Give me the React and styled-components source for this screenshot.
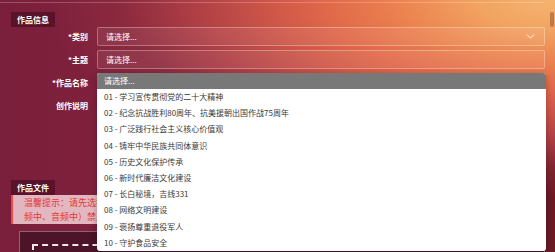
import React from "react";
import styled, { createGlobalStyle } from "styled-components";
import { ChevronDown } from "lucide-react";

const GlobalStyle = createGlobalStyle`
  html, body {
    margin: 0;
    padding: 0;
  }
  body {
    width: 555px;
    height: 252px;
    overflow: hidden;
    font-family: "Noto Sans CJK SC", "Noto Sans", sans-serif;
  }
`;

const Page = styled.div`
  position: relative;
  width: 555px;
  height: 252px;
  overflow: hidden;
  box-sizing: border-box;
  padding-top: 2px;
  background:
    radial-gradient(
      ellipse 92% 78% at 100% 0%,
      #f4b470 0%,
      #f2a462 15%,
      #ec8450 30%,
      #e0684a 45%,
      #d05848 55%,
      #b04045 70%,
      rgba(150, 50, 62, 0.5) 85%,
      rgba(150, 50, 62, 0) 100%
    ),
    linear-gradient(to right, #7a1f3b 0%, #862340 40%, #6a1a22 100%);
`;

const ScrollThumb = styled.div`
  position: absolute;
  top: 12px;
  right: 1px;
  width: 4px;
  height: 15px;
  border-radius: 2px;
  background: rgba(110, 50, 30, 0.4);
`;

const Panel = styled.div`
  display: flex;
  flex-direction: column;
  align-items: flex-start;
  width: 545px;
  box-sizing: border-box;
  border-top: 1px solid rgba(255, 255, 255, 0.22);
  padding: 9px 0 0 11px;
`;

const SectionTitle = styled.div`
  height: 15px;
  line-height: 15px;
  padding: 0 6px;
  margin-top: ${(p) => p.gap || 0}px;
  background: rgba(60, 8, 28, 0.55);
  color: #fff;
  font-size: 8px;
  font-weight: 700;
`;

const Form = styled.div`
  display: flex;
  flex-direction: column;
  gap: 4px;
`;

const Row = styled.div`
  display: grid;
  grid-template-columns: 77px 448px;
  column-gap: 9px;
  align-items: start;
`;

const Label = styled.div`
  text-align: right;
  height: 19px;
  line-height: 19px;
  color: #fff;
  font-size: 8px;
  font-weight: 700;
`;

const Field = styled.div`
  position: relative;
  display: flex;
  align-items: center;
  justify-content: space-between;
  height: ${(p) => p.h || 19}px;
  box-sizing: border-box;
  padding: 0 7px 0 8px;
  border: 1px solid rgba(255, 255, 255, 0.3);
  border-radius: 2px;
  background: rgba(255, 255, 255, 0.07);
  color: #fff;
  font-size: 8px;
`;

const Dropdown = styled.div`
  position: absolute;
  top: -1px;
  left: -1px;
  right: -2px;
  border-radius: 3px;
  overflow: hidden;
  background: #fff;
  box-shadow: 0 2px 6px rgba(0, 0, 0, 0.25);
  z-index: 2;
`;

const DropHead = styled.div`
  height: 16px;
  line-height: 16px;
  padding-left: 7px;
  background: #787878;
  color: #fff;
  font-size: 8px;
`;

const Option = styled.div`
  height: 16.2px;
  line-height: 16.2px;
  padding-left: 7px;
  color: #3a3a3a;
  font-size: 8px;
  white-space: nowrap;
`;

const Notice = styled.div`
  width: 534px;
  box-sizing: border-box;
  padding: 1px 8px 0 11px;
  height: 29px;
  border-left: 2px solid #f24848;
  background: rgba(255, 226, 230, 0.78);
  color: #e23a3a;
  font-size: 9px;
  line-height: 14px;
  white-space: nowrap;
  overflow: hidden;
`;

const UploadBox = styled.div`
  margin: 7px 0 0 8px;
  width: 526px;
  height: 40px;
  box-sizing: border-box;
  padding: 12px 12px 0;
  border: 1px solid rgba(255, 255, 255, 0.35);
  background: #4c1329;
`;

const DropZone = styled.div`
  height: 60px;
  border: 2px dashed rgba(255, 255, 255, 0.9);
`;

const options = [
  "01 - 学习宣传贯彻党的二十大精神",
  "02 - 纪念抗战胜利80周年、抗美援朝出国作战75周年",
  "03 - 广泛践行社会主义核心价值观",
  "04 - 铸牢中华民族共同体意识",
  "05 - 历史文化保护传承",
  "06 - 新时代廉洁文化建设",
  "07 - 长白秘境，吉线331",
  "08 - 网络文明建设",
  "09 - 褒扬尊重退役军人",
  "10 - 守护食品安全",
];

export default function App() {
  return (
    <Page>
      <GlobalStyle />
      <ScrollThumb />
      <Panel>
        <SectionTitle>作品信息</SectionTitle>
        <Form>
          <Row>
            <Label>*类别</Label>
            <Field>
              <span>请选择...</span>
              <ChevronDown size={13} strokeWidth={1.6} color="#fff" />
            </Field>
          </Row>
          <Row>
            <Label>*主题</Label>
            <Field>
              <span>请选择...</span>
            </Field>
          </Row>
          <Row>
            <Label>*作品名称</Label>
            <Field>
              <span>请选择...</span>
              <Dropdown>
                <DropHead>请选择...</DropHead>
                {options.map((o) => (
                  <Option key={o}>{o}</Option>
                ))}
              </Dropdown>
            </Field>
          </Row>
          <Row>
            <Label>创作说明</Label>
            <Field h={74} />
          </Row>
        </Form>
        <SectionTitle gap={10}>作品文件</SectionTitle>
        <Notice>
          温馨提示：请先选择作品类别，再上传作品文件。作品文件（包括视
          <br />
          频中、音频中）禁止出现作者姓名、所在单位等个人信息。
        </Notice>
        <UploadBox>
          <DropZone />
        </UploadBox>
      </Panel>
    </Page>
  );
}
